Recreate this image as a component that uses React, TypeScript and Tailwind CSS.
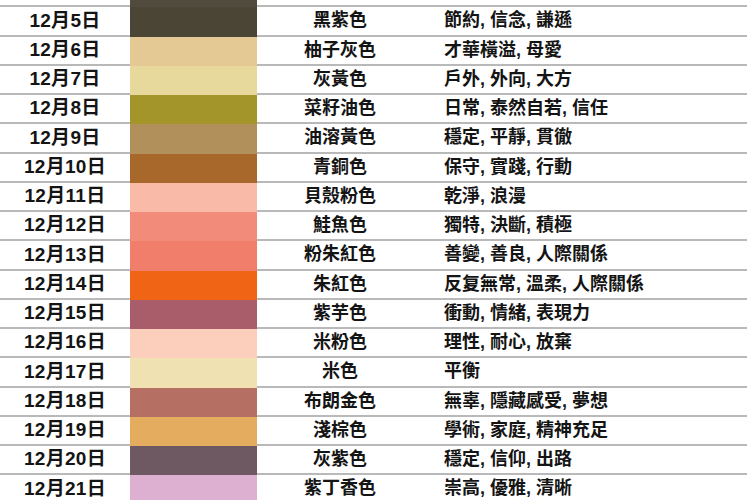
import React from "react";

type Row = { date: string; color: string; name: string; traits: string };

const rows: Row[] = [
  { date: "12月4日", color: "#514b3d", name: "暗褐色", traits: "穩重, 踏實, 可靠" },
  { date: "12月5日", color: "#4b4536", name: "黑紫色", traits: "節約, 信念, 謙遜" },
  { date: "12月6日", color: "#e4c994", name: "柚子灰色", traits: "才華橫溢, 母愛" },
  { date: "12月7日", color: "#e7d89c", name: "灰黃色", traits: "戶外, 外向, 大方" },
  { date: "12月8日", color: "#a39529", name: "菜籽油色", traits: "日常, 泰然自若, 信任" },
  { date: "12月9日", color: "#b1905b", name: "油溶黃色", traits: "穩定, 平靜, 貫徹" },
  { date: "12月10日", color: "#a8672b", name: "青銅色", traits: "保守, 實踐, 行動" },
  { date: "12月11日", color: "#f9bba8", name: "貝殼粉色", traits: "乾淨, 浪漫" },
  { date: "12月12日", color: "#f38b7b", name: "鮭魚色", traits: "獨特, 決斷, 積極" },
  { date: "12月13日", color: "#f17d6b", name: "粉朱紅色", traits: "善變, 善良, 人際關係" },
  { date: "12月14日", color: "#ef6415", name: "朱紅色", traits: "反复無常, 溫柔, 人際關係" },
  { date: "12月15日", color: "#a95c69", name: "紫芋色", traits: "衝動, 情緒, 表現力" },
  { date: "12月16日", color: "#fbcfbb", name: "米粉色", traits: "理性, 耐心, 放棄" },
  { date: "12月17日", color: "#f0e1b2", name: "米色", traits: "平衡" },
  { date: "12月18日", color: "#b56f63", name: "布朗金色", traits: "無辜, 隱藏感受, 夢想" },
  { date: "12月19日", color: "#e3ac5e", name: "淺棕色", traits: "學術, 家庭, 精神充足" },
  { date: "12月20日", color: "#6e5862", name: "灰紫色", traits: "穩定, 信仰, 出路" },
  { date: "12月21日", color: "#ddafd1", name: "紫丁香色", traits: "崇高, 優雅, 清晰" },
];

const font = { fontFamily: '"Liberation Sans", "Noto Sans CJK TC", sans-serif' };

export default function App() {
  return (
    <div className="w-[750px] h-[500px] overflow-hidden bg-white text-[#141414]" style={font}>
      <div className="-mt-[22px] w-[747px]">
        {rows.map((r) => (
          <div key={r.date} className="flex h-[29.25px]">
            <div className="w-[130px] border-b-2 border-[#b9b9b9] flex items-center justify-center text-[19px] font-semibold tracking-[0.3px]">
              {r.date}
            </div>
            <div className="w-[127px]" style={{ backgroundColor: r.color }} />
            <div className="w-[166px] border-b-2 border-[#b9b9b9] flex items-center justify-center text-[18px] font-semibold">
              {r.name}
            </div>
            <div className="flex-1 border-b-2 border-[#b9b9b9] flex items-center pl-[21px] text-[18px] font-semibold">
              {r.traits}
            </div>
          </div>
        ))}
      </div>
    </div>
  );
}
